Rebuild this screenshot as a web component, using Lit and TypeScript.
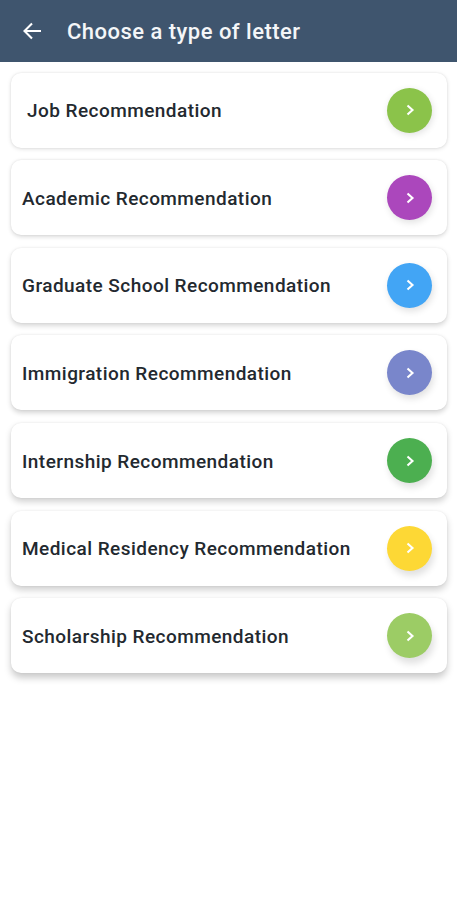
import { LitElement, html, css } from "lit";
import { customElement } from "lit/decorators.js";

const items: { label: string; color: string; cls?: string }[] = [
  { label: "Job Recommendation", color: "#8bc34a", cls: "indent" },
  { label: "Academic Recommendation", color: "#ab47bc" },
  { label: "Graduate School Recommendation", color: "#42a5f5" },
  { label: "Immigration Recommendation", color: "#7986cb" },
  { label: "Internship Recommendation", color: "#4caf50" },
  { label: "Medical Residency Recommendation", color: "#fdd835" },
  { label: "Scholarship Recommendation", color: "#9ccc65" },
];

@customElement("app-root")
export class AppRoot extends LitElement {
  static styles = css`
    :host {
      display: block;
      width: 457px;
      height: 900px;
      background: #fff;
      font-family: Roboto, "Noto Sans", sans-serif;
      overflow: hidden;
    }
    .bar {
      height: 62px;
      background: #3f556e;
      display: flex;
      align-items: center;
      gap: 25px;
      padding-left: 22px;
      box-sizing: border-box;
      color: #fff;
    }
    .bar svg { width: 20px; height: 20px; flex: none; }
    .title {
      font-size: 22px;
      font-weight: 500;
      letter-spacing: 0.48px;
      color: #f4f6f8;
    }
    .list {
      display: flex;
      flex-direction: column;
      gap: 12.67px;
      padding: 10.5px 10px 0 11px;
    }
    .card {
      height: 75px;
      box-sizing: border-box;
      background: #fff;
      border-radius: 10px;
      display: flex;
      align-items: center;
      justify-content: space-between;
      padding: 0 15px 0 11px;
    }
    .label {
      font-size: 19px;
      font-weight: 500;
      letter-spacing: 0.45px;
      color: #23292f;
      position: relative;
      top: 0.5px;
    }
    .indent { padding-left: 5px; }
    .dot {
      width: 45px;
      height: 45px;
      border-radius: 50%;
      display: flex;
      align-items: center;
      justify-content: center;
    }
    .dot svg { width: 14px; height: 14px; }
  `;

  render() {
    return html`
      <div class="bar">
        <svg viewBox="0 0 20 20" fill="none" stroke="#fff" stroke-width="2.1">
          <path d="M19 10H2.5M10 2.5L2.5 10L10 17.5" />
        </svg>
        <div class="title">Choose a type of letter</div>
      </div>
      <div class="list">
        ${items.map((item, n) => {
          const drop = 1 + n * 0.6;
          const blur = 4 + n * 0.6;
          const alpha = 0.13 + n * 0.012;
          const dotDrop = 2 + n * 0.6;
          const dotSide = 1 + n * 0.2;
          return html`
            <div
              class="card"
              style="box-shadow:0 ${drop}px ${blur}px rgba(0,0,0,${alpha}),0 0 2px rgba(0,0,0,0.08)"
            >
              <span class="label ${item.cls ?? ""}">${item.label}</span>
              <span
                class="dot"
                style="background:${item.color};box-shadow:${dotSide}px ${dotDrop}px 7px rgba(0,0,0,0.12)"
              >
                <svg viewBox="0 0 14 14" fill="none" stroke="#fff" stroke-width="2.1">
                  <path d="M4.5 2.5L9.5 7L4.5 11.5" />
                </svg>
              </span>
            </div>
          `;
        })}
      </div>
    `;
  }
}
